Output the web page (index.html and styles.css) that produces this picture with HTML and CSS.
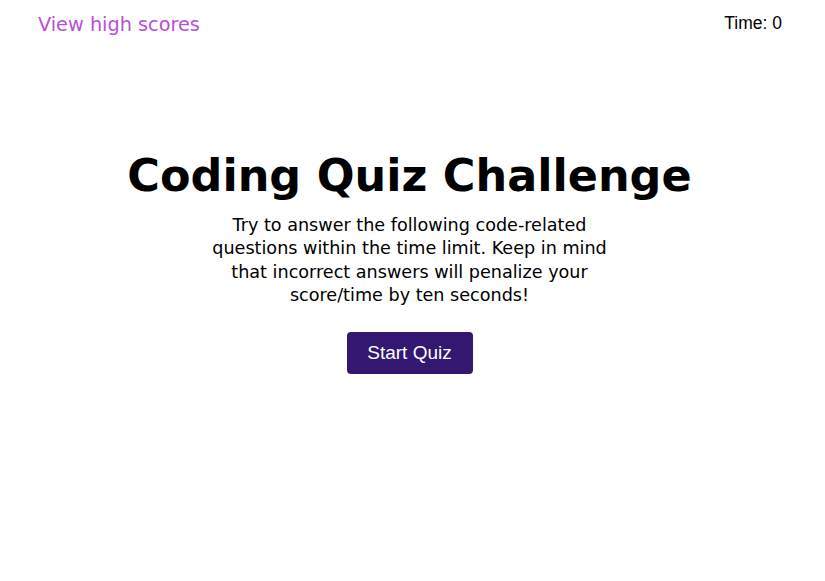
FILE: index.html
```html
<!DOCTYPE html>
<html lang="en">
<head>
<meta charset="utf-8">
<title>Coding Quiz</title>
<link rel="stylesheet" href="styles.css">
</head>
<body>
<header class="top">
  <a class="scores" href="#">View high scores</a>
  <div class="timer">Time: <span>0</span></div>
</header>
<main class="intro">
  <h1 class="title">Coding Quiz Challenge</h1>
  <p class="desc">Try to answer the following code-related questions within the time limit. Keep in mind that incorrect answers will penalize your score/time by ten seconds!</p>
  <button class="start">Start Quiz</button>
</main>
</body>
</html>
```
FILE: styles.css
```css
html, body {
  margin: 0;
  padding: 0;
  background: #fff;
}
body {
  font-family: "DejaVu Sans", sans-serif;
  color: #000;
}
.top {
  display: flex;
  justify-content: space-between;
  align-items: flex-start;
  height: 36px;
  padding: 0 43px 0 38px;
}
.scores {
  margin-top: 13px;
  color: #b84fd9;
  text-decoration: none;
  font-size: 19.3px;
  line-height: 24px;
}
.timer {
  margin-top: 13px;
  font-family: "Liberation Sans", Arial, sans-serif;
  font-size: 17.5px;
  line-height: 20px;
  color: #000;
}
.intro {
  display: flex;
  flex-direction: column;
  align-items: center;
  margin-top: 113px;
  padding-right: 6px;
}
.title {
  margin: 0;
  font-size: 44.5px;
  font-weight: bold;
  line-height: 54px;
}
.desc {
  margin: 11px 0 0;
  width: 410px;
  text-align: center;
  font-size: 17.6px;
  line-height: 23.4px;
}
.start {
  margin-top: 24px;
  width: 126px;
  height: 42px;
  border: none;
  border-radius: 4px;
  background: #331770;
  color: #fff;
  font-family: "Liberation Sans", Arial, sans-serif;
  font-size: 19px;
  cursor: pointer;
}
```
